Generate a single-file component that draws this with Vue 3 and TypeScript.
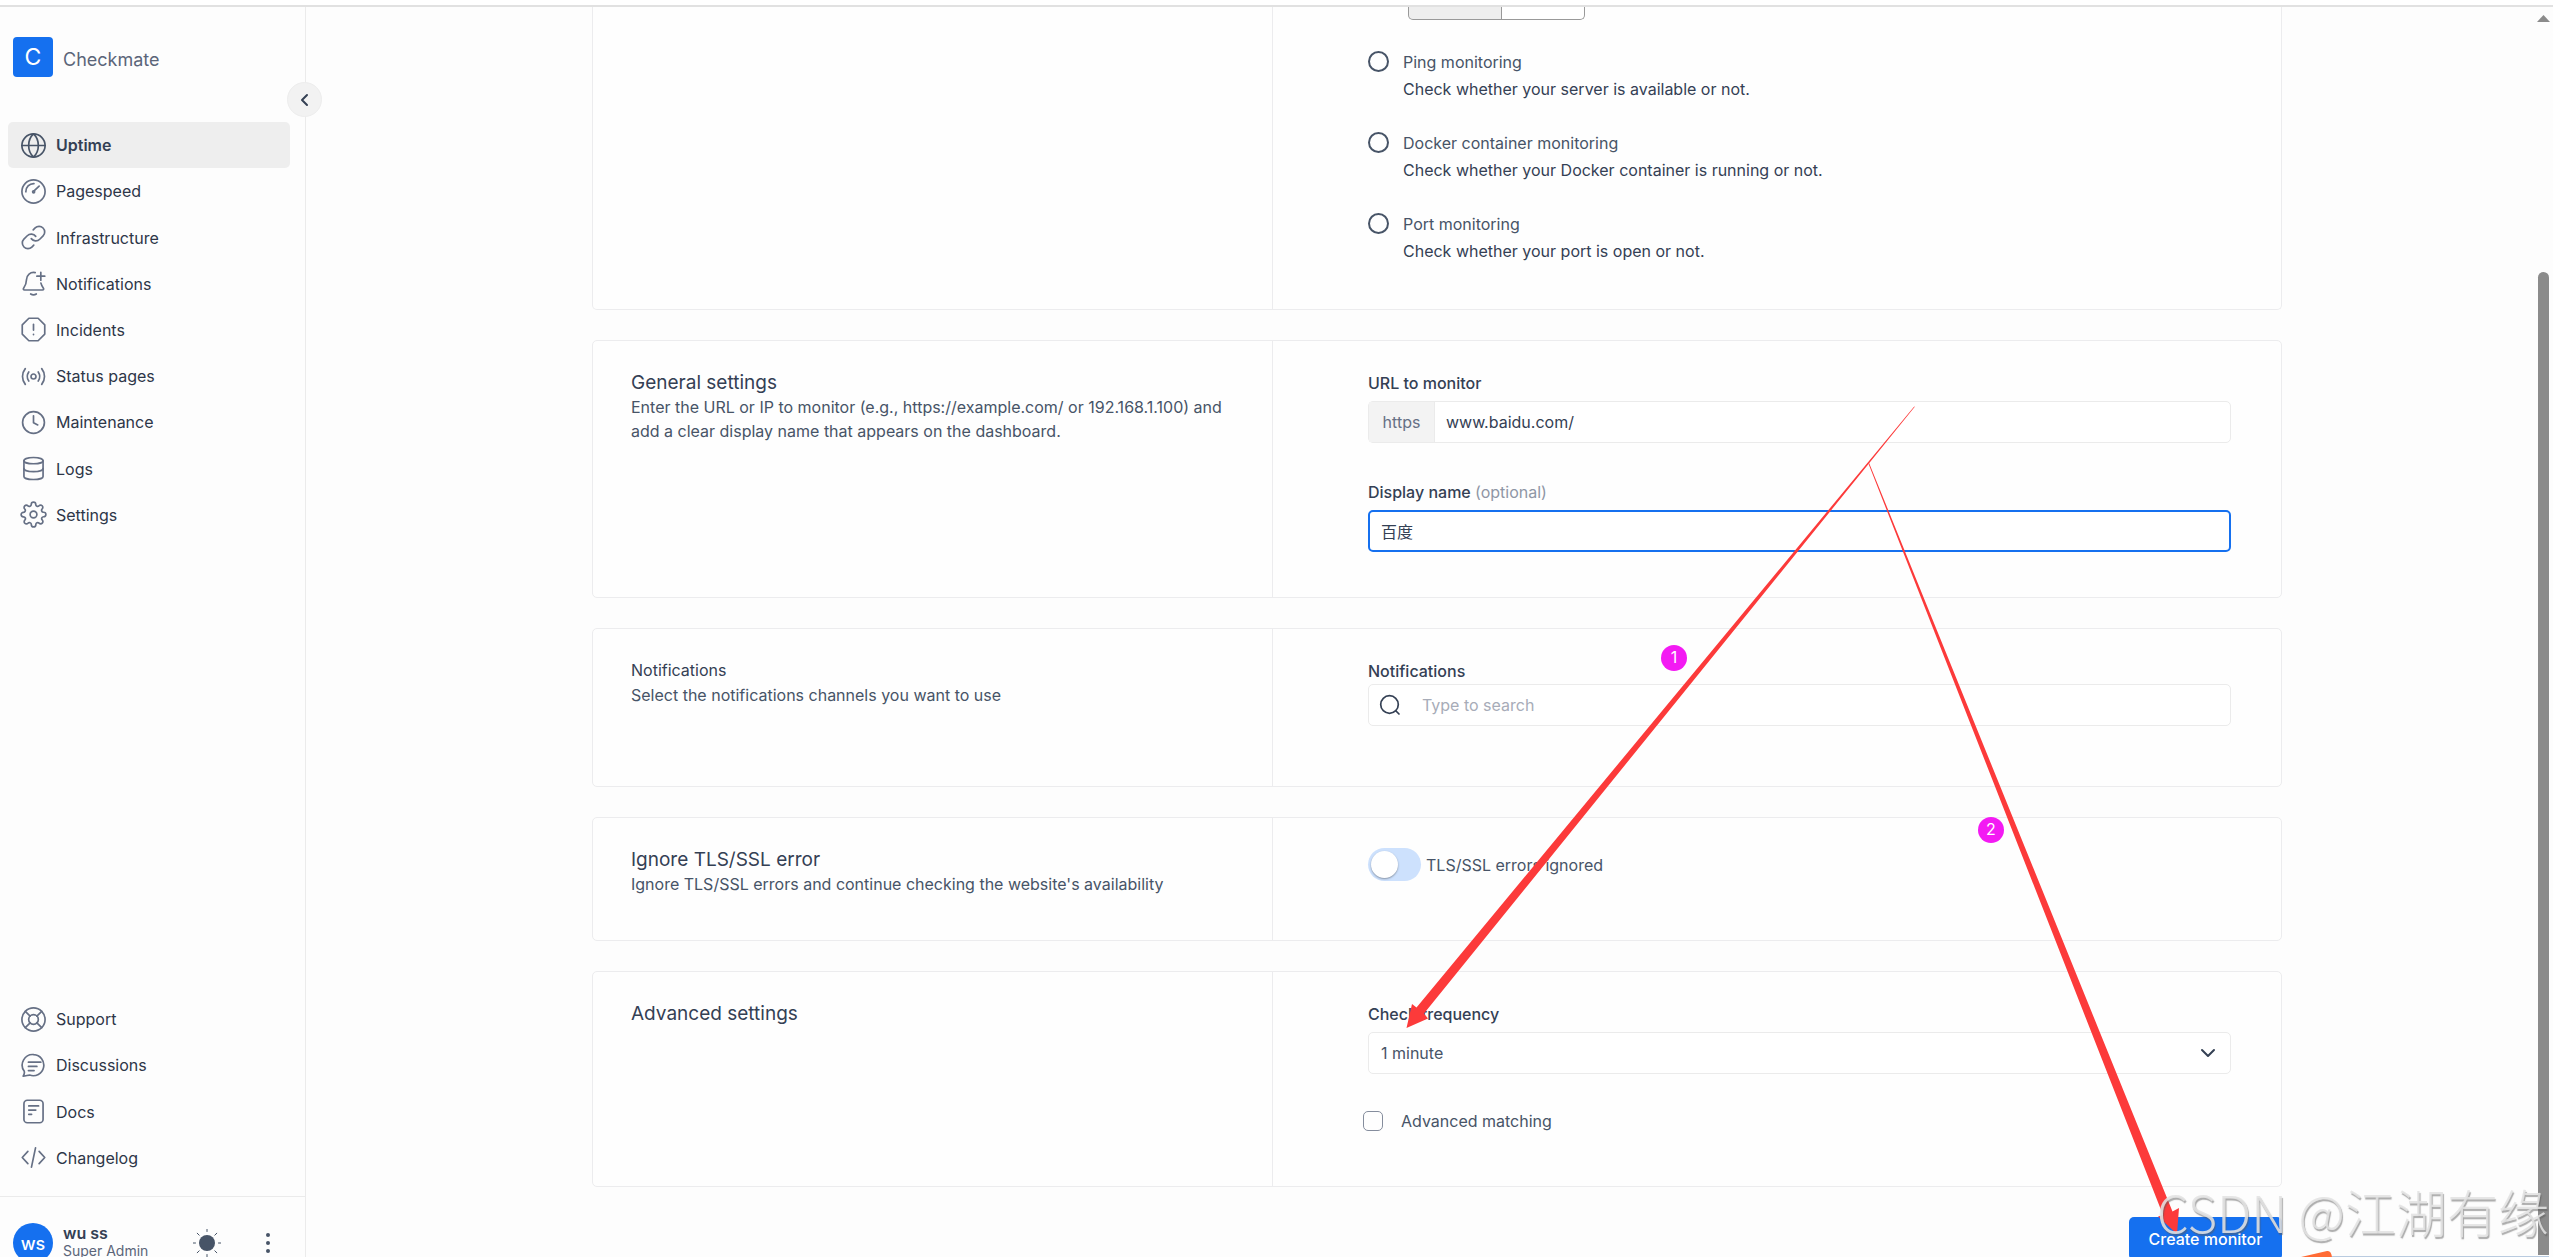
<script setup lang="ts">
import { ref } from 'vue'

interface NavItem {
  label: string
  paths: string[]
}

const mainNav: NavItem[] = [
  {
    label: 'Uptime',
    paths: [
      'M1.7 12a10.3 10.3 0 1 0 20.6 0a10.3 10.3 0 1 0-20.6 0z',
      'M1.7 12h20.6',
      'M12 1.7c-2.8 2.6-4.3 6.300-4.300 10.300s1.500 7.700 4.300 10.300c2.800-2.600 4.300-6.300 4.300-10.300S14.800 4.300 12 1.700z',
    ],
  },
  {
    label: 'Pagespeed',
    paths: [
      'M1.7 12a10.3 10.3 0 1 0 20.6 0a10.3 10.3 0 1 0-20.6 0z',
      'M5.200 12.300A7 7 0 0 1 12.400 5',
      'M12.500 11.500L17 7.200',
      'M11.200 12.300a.9.9 0 1 0 1.800 0a.9.9 0 1 0-1.800 0z',
    ],
  },
  {
    label: 'Infrastructure',
    paths: [
      'M10 13a5 5 0 0 0 7.540.540l3-3a5 5 0 0 0-7.070-7.070l-1.720 1.710',
      'M14 11a5 5 0 0 0-7.540-.540l-3 3a5 5 0 0 0 7.070 7.070l1.710-1.710',
    ],
  },
  {
    label: 'Notifications',
    paths: [
      'M13.500 2.300C9 1.500 6 4.500 5.800 8.500c-.1 4-1.300 6-2.600 7.700-.5.8-.2 1.600.8 1.600h16c1 0 1.300-.8.8-1.600-.9-1.200-1.700-2.500-2.200-4.500',
      'M9.500 21.300c1.500 1 3.500 1 5 0',
      'M18.500 2v7M15 5.500h7',
    ],
  },
  {
    label: 'Incidents',
    paths: ['M7.900 2h8.200L22 7.900v8.200L16.100 22H7.900L2 16.100V7.900z', 'M12 7.500v5', 'M12 16.200v.3'],
  },
  {
    label: 'Status pages',
    paths: [
      'M9.800 12a2.200 2.200 0 1 0 4.400 0a2.200 2.200 0 1 0-4.400 0z',
      'M4.700 5c-3.300 4.200-3.300 9.800 0 14',
      'M19.300 5c3.300 4.200 3.300 9.800 0 14',
      'M7.800 8c-1.700 2.500-1.700 5.500 0 8',
      'M16.200 8c1.700 2.500 1.700 5.500 0 8',
    ],
  },
  {
    label: 'Maintenance',
    paths: ['M2.300 12a9.700 9.700 0 1 0 19.400 0a9.700 9.700 0 1 0-19.400 0z', 'M12 6v6.200l3.800 2'],
  },
  {
    label: 'Logs',
    paths: [
      'M3.500 5c0-1.600 3.800-2.800 8.500-2.800s8.500 1.200 8.500 2.800-3.800 2.800-8.500 2.800S3.500 6.600 3.500 5z',
      'M3.500 5v14c0 1.600 3.800 2.800 8.500 2.800s8.500-1.200 8.500-2.800V5',
      'M3.500 12c0 1.600 3.800 2.800 8.500 2.800s8.500-1.200 8.500-2.800',
    ],
  },
  {
    label: 'Settings',
    paths: [
      'M9 12a3 3 0 1 0 6 0a3 3 0 1 0-6 0z',
      'M19.4 15a1.65 1.65 0 0 0 .33 1.82l.06.06a2 2 0 0 1 0 2.83 2 2 0 0 1-2.83 0l-.06-.06a1.65 1.65 0 0 0-1.82-.33 1.65 1.65 0 0 0-1 1.51V21a2 2 0 0 1-2 2 2 2 0 0 1-2-2v-.09A1.65 1.65 0 0 0 9 19.4a1.65 1.65 0 0 0-1.82.33l-.06.06a2 2 0 0 1-2.83 0 2 2 0 0 1 0-2.83l.06-.06a1.65 1.65 0 0 0 .33-1.82 1.65 1.65 0 0 0-1.51-1H3a2 2 0 0 1-2-2 2 2 0 0 1 2-2h.09A1.65 1.65 0 0 0 4.6 9a1.65 1.65 0 0 0-.33-1.82l-.06-.06a2 2 0 0 1 0-2.83 2 2 0 0 1 2.83 0l.06.06a1.65 1.65 0 0 0 1.82.33H9a1.65 1.65 0 0 0 1-1.51V3a2 2 0 0 1 2-2 2 2 0 0 1 2 2v.09a1.65 1.65 0 0 0 1 1.51 1.65 1.65 0 0 0 1.82-.33l.06-.06a2 2 0 0 1 2.83 0 2 2 0 0 1 0 2.83l-.06.06a1.65 1.65 0 0 0-.33 1.82V9a1.65 1.65 0 0 0 1.51 1H21a2 2 0 0 1 2 2 2 2 0 0 1-2 2h-.09a1.65 1.65 0 0 0-1.51 1z',
    ],
  },
]

const helpNav: NavItem[] = [
  {
    label: 'Support',
    paths: [
      'M1.700 12a10.300 10.300 0 1 0 20.600 0a10.300 10.300 0 1 0-20.600 0z',
      'M7.700 12a4.300 4.300 0 1 0 8.600 0a4.300 4.300 0 1 0-8.600 0z',
      'M4.700 4.700L9 9M15 15l4.300 4.300M19.300 4.700L15 9M9 15l-4.300 4.300',
    ],
  },
  {
    label: 'Discussions',
    paths: [
      'M12.300 2.300a9.400 9.400 0 1 1-3.800 18.200c-1.400 0-3.500.9-5.700 1 .9-1.500 1.400-2.800 1-4.300A9.400 9.400 0 0 1 12.300 2.300z',
      'M7.500 9h11M7.500 12.800h7.500M7.500 16.500h5',
    ],
  },
  {
    label: 'Docs',
    paths: [
      'M6.500 2h11a3 3 0 0 1 3 3v14a3 3 0 0 1-3 3h-11a3 3 0 0 1-3-3V5a3 3 0 0 1 3-3z',
      'M7.800 7h8.700M7.800 10.700h6.200M7.800 14.500h2.500',
    ],
  },
  {
    label: 'Changelog',
    paths: ['M7 6.500L2 12l5 5.500', 'M17 6.500l5 5.500-5 5.500', 'M13.800 3.500l-3.600 17'],
  },
]

const kinds = [
  { id: 'ping', title: 'Ping monitoring', text: 'Check whether your server is available or not.' },
  { id: 'docker', title: 'Docker container monitoring', text: 'Check whether your Docker container is running or not.' },
  { id: 'port', title: 'Port monitoring', text: 'Check whether your port is open or not.' },
]

const kind = ref('http')
const url = ref('www.baidu.com/')
const displayName = ref('百度')
const search = ref('')
const ignoreTls = ref(false)
const frequency = ref('1 minute')
const advanced = ref(false)
</script>

<template>
  <div class="shell">
    <aside class="sidebar">
      <div class="brand">
        <span class="logo">C</span>
        <span class="brand-name">Checkmate</span>
      </div>
      <button class="collapse" type="button" aria-label="Collapse sidebar">
        <svg width="18" height="18" viewBox="0 0 18 18"><path d="M11 4L6 9l5 5" /></svg>
      </button>
      <nav class="nav nav-main">
        <a v-for="(item, i) in mainNav" :key="item.label" href="#" class="nav-item" :class="{ active: i === 0 }">
          <svg class="nav-icon" viewBox="0 0 24 24"><path v-for="d in item.paths" :key="d" :d="d" /></svg>
          {{ item.label }}
        </a>
      </nav>
      <nav class="nav nav-help">
        <a v-for="item in helpNav" :key="item.label" href="#" class="nav-item">
          <svg class="nav-icon" viewBox="0 0 24 24"><path v-for="d in item.paths" :key="d" :d="d" /></svg>
          {{ item.label }}
        </a>
      </nav>
      <div class="account">
        <span class="avatar">ws</span>
        <div class="who">
          <span class="who-name">wu ss</span>
          <span class="who-role">Super Admin</span>
        </div>
        <button class="icon-btn theme" type="button" aria-label="Theme">
          <svg width="28" height="28" viewBox="0 0 28 28">
            <circle cx="14" cy="14" r="8" />
            <path d="M14 0v2.500M14 25.500V28M0 14h2.500M25.500 14H28M4.200 4.200l2 2M21.800 21.800l2 2M4.200 23.800l2-2M21.800 6.200l2-2" />
          </svg>
        </button>
        <button class="icon-btn" type="button" aria-label="Account menu">
          <svg width="8" height="24" viewBox="0 0 8 24">
            <circle cx="4" cy="4" r="2" /><circle cx="4" cy="12" r="2" /><circle cx="4" cy="20" r="2" />
          </svg>
        </button>
      </div>
    </aside>

    <main class="main">
      <form class="form" @submit.prevent>
        <section class="card card-first">
          <div class="card-side"></div>
          <div class="card-body">
            <div class="protocol">
              <button type="button" class="on" aria-label="HTTPS"></button>
              <button type="button" aria-label="HTTP"></button>
            </div>
            <div class="kinds">
              <label v-for="k in kinds" :key="k.id" class="kind">
                <input v-model="kind" type="radio" name="kind" :value="k.id" />
                <span class="kind-text">
                  <span class="kind-title">{{ k.title }}</span>
                  <span>{{ k.text }}</span>
                </span>
              </label>
            </div>
          </div>
        </section>

        <section class="card card-general">
          <div class="card-side">
            <h2>General settings</h2>
            <p>Enter the URL or IP to monitor (e.g., https://example.com/ or 192.168.1.100) and add a clear display name that appears on the dashboard.</p>
          </div>
          <div class="card-body fields">
            <div class="field">
              <label for="url">URL to monitor</label>
              <div class="control">
                <span class="prefix">https</span>
                <input id="url" v-model="url" type="text" />
              </div>
            </div>
            <div class="field">
              <label for="name">Display name <span class="optional">(optional)</span></label>
              <div class="control focused">
                <input id="name" v-model="displayName" type="text" />
              </div>
            </div>
          </div>
        </section>

        <section class="card card-notify">
          <div class="card-side">
            <h2 class="small">Notifications</h2>
            <p>Select the notifications channels you want to use</p>
          </div>
          <div class="card-body">
            <div class="field tight">
              <label for="search">Notifications</label>
              <div class="control">
                <svg class="search-icon" width="24" height="24" viewBox="0 0 24 24">
                  <circle cx="11.500" cy="11.500" r="8.800" /><path d="M18 18l3 3" />
                </svg>
                <input id="search" v-model="search" type="text" placeholder="Type to search" />
              </div>
            </div>
          </div>
        </section>

        <section class="card card-tls">
          <div class="card-side">
            <h2>Ignore TLS/SSL error</h2>
            <p>Ignore TLS/SSL errors and continue checking the website's availability</p>
          </div>
          <div class="card-body">
            <label class="switch-row">
              <input v-model="ignoreTls" class="switch" type="checkbox" role="switch" />
              TLS/SSL errors ignored
            </label>
          </div>
        </section>

        <section class="card card-advanced">
          <div class="card-side">
            <h2>Advanced settings</h2>
          </div>
          <div class="card-body fields">
            <div class="field">
              <label for="frequency">Check frequency</label>
              <div class="control">
                <select id="frequency" v-model="frequency">
                  <option>1 minute</option>
                </select>
                <svg class="chevron" width="16" height="16" viewBox="0 0 16 16"><path d="M2 5l6 6 6-6" /></svg>
              </div>
            </div>
            <label class="check-row">
              <input v-model="advanced" type="checkbox" />
              Advanced matching
            </label>
          </div>
        </section>

        <button class="submit" type="submit">Create monitor</button>
      </form>
    </main>

    <div class="scrollbar">
      <svg width="13" height="7" viewBox="0 0 13 7"><path d="M6.500 0L13 7H0z" /></svg>
      <div class="thumb"></div>
    </div>

    <svg class="arrows" width="2553" height="1257" viewBox="0 0 2553 1257">
      <path fill="#fc3a3a" d="M1914.800 406.800L1424 1013.500L1428 1018.500L1406.500 1028L1412 1004L1416.500 1007.500L1914.200 406.400z" />
      <path fill="#fc3a3a" d="M1868.400 463.500L1869.200 463.200L2172.500 1211.500L2179 1208L2177 1234L2158 1216.500L2163 1215z" />
      <path fill="#ff6b35" d="M2301 1257L2327 1251Q2331 1250 2332 1257z" />
      <path fill="#b9cbe0" d="M2332 1256h217v1h-217z" />
    </svg>
    <span class="step step-one">1</span>
    <span class="step step-two">2</span>
    <div class="watermark">CSDN @江湖有缘</div>
  </div>
</template>

<style>
html,
body {
  margin: 0;
  background: #fdfdfd;
}
</style>

<style scoped>
.shell {
  position: relative;
  display: flex;
  height: 100vh;
  overflow: hidden;
  box-sizing: border-box;
  padding-top: 7px;
  background: linear-gradient(#ffffff 5px, #e1e1e1 5px, #e1e1e1 7px, #fdfdfd 7px);
  font-family: Inter, 'Noto Sans CJK SC', sans-serif;
  font-size: 16px;
  line-height: 24px;
  color: #344054;
}

.shell *,
.shell *::before {
  box-sizing: border-box;
}

button,
input,
select {
  font: inherit;
  color: inherit;
}

svg {
  fill: none;
  stroke: currentColor;
  stroke-linecap: round;
  stroke-linejoin: round;
}

/* Sidebar */
.sidebar {
  position: relative;
  flex: 0 0 306px;
  display: flex;
  flex-direction: column;
  border-right: 1px solid #ebebeb;
}

.brand {
  display: flex;
  align-items: center;
  gap: 10px;
  padding: 30px 13px 0;
}

.logo {
  width: 40px;
  height: 40px;
  border-radius: 4px;
  background: #1570ef;
  color: #fff;
  font-size: 23px;
  line-height: 40px;
  text-align: center;
}

.brand-name {
  padding-top: 6px;
  font-size: 18px;
  color: #5b6579;
}

.collapse {
  position: absolute;
  top: 75px;
  right: -17px;
  display: grid;
  place-items: center;
  width: 35px;
  height: 35px;
  padding: 0;
  border: 1px solid #ededed;
  border-radius: 50%;
  background: #f2f2f2;
}

.collapse svg {
  stroke-width: 2;
}

.nav {
  display: grid;
  grid-auto-rows: 1fr;
  padding: 0 15px 0 8px;
}

.nav-main {
  height: 416px;
  margin-top: 45px;
}

.nav-help {
  height: 185px;
  margin-top: auto;
}

.nav-item {
  display: flex;
  align-items: center;
  gap: 9px;
  padding: 0 12px;
  border-radius: 5px;
  color: #2d3648;
  text-decoration: none;
}

.nav-item.active {
  background: #eeeeee;
  color: #344054;
  font-weight: 600;
}

.nav-icon {
  width: 27px;
  height: 27px;
  color: #667085;
  stroke-width: 1.5;
}

.active .nav-icon {
  color: #475467;
}

.account {
  display: flex;
  align-items: center;
  height: 61px;
  margin-top: 15px;
  padding: 32px 8px 0 13px;
  border-top: 1px solid #ebebeb;
}

.avatar {
  flex: none;
  width: 40px;
  height: 40px;
  border-radius: 50%;
  background: #1570ef;
  color: #fff;
  font-size: 18px;
  font-weight: 500;
  line-height: 42px;
  text-align: center;
}

.who {
  display: flex;
  flex-direction: column;
  width: 130px;
  margin-left: 10px;
  padding-bottom: 2px;
  line-height: 18px;
}

.who-name {
  font-weight: 600;
}

.who-role {
  font-size: 14px;
  color: #5b6579;
}

.icon-btn {
  display: flex;
  padding: 0;
  border: 0;
  background: none;
  color: #475467;
}

.icon-btn circle {
  fill: currentColor;
  stroke: none;
}

.theme {
  margin-right: 43px;
}

/* Form */
.main {
  flex: 1;
  min-width: 0;
  padding-left: 15px;
}

.form {
  display: flex;
  flex-direction: column;
  gap: 30px;
  max-width: 1690px;
  margin: 0 auto;
}

.card {
  display: grid;
  grid-template-columns: 680fr 1008fr;
  border: 1px solid #ececee;
  border-radius: 5px;
  background: #fefefe;
}

.card-side {
  padding: 29px 38px;
  border-right: 1px solid #ececee;
}

.card-body {
  padding: 30px 50px 45px 95px;
}

.card-first {
  border-top: 0;
  border-radius: 0 0 5px 5px;
}

.card-first .card-body {
  padding-top: 0;
  padding-bottom: 44px;
}

.card-notify .card-body {
  padding-bottom: 60px;
}

.card-tls .card-body {
  padding-bottom: 59px;
}

.card-advanced .card-body {
  padding-bottom: 55px;
}

h2 {
  margin: 0;
  font-size: 19px;
  font-weight: 400;
  line-height: 25px;
}

h2.small {
  font-size: 16px;
}

p {
  margin: 0;
  color: #475467;
}

.protocol {
  display: flex;
  padding-left: 40px;
}

.protocol button {
  width: 83px;
  height: 13px;
  padding: 0;
  border: 1px solid #999;
  border-top: 0;
  border-left: 0;
  border-radius: 0 0 5px 0;
  background: #fff;
}

.protocol .on {
  width: 94px;
  border-left: 1px solid #999;
  border-radius: 0 0 0 5px;
  background: #eeeeee;
}

.kinds {
  display: flex;
  flex-direction: column;
  gap: 27px;
  padding-top: 29px;
}

.kind {
  display: flex;
  gap: 14px;
}

.kind input {
  appearance: none;
  flex: none;
  width: 21px;
  height: 21px;
  margin: 2px 0 0;
  border: 2px solid #475467;
  border-radius: 50%;
}

.kind-text {
  display: flex;
  flex-direction: column;
  line-height: 27px;
}

.kind-title {
  color: #475467;
}

.fields {
  display: flex;
  flex-direction: column;
  gap: 37px;
}

.field {
  display: flex;
  flex-direction: column;
  gap: 6px;
}

.field.tight {
  gap: 1px;
}

.field > label {
  font-weight: 500;
}

.optional {
  font-weight: 400;
  color: #8f96a5;
}

.control {
  position: relative;
  display: flex;
  align-items: center;
  height: 42px;
  border: 1px solid #ebebeb;
  border-radius: 5px;
  background: #fff;
}

.control.focused {
  border: 2px solid #1570ef;
}

.control input,
.control select {
  flex: 1;
  min-width: 0;
  height: 100%;
  padding: 0 11px;
  border: 0;
  outline: 0;
  background: none;
}

.control select {
  appearance: none;
  padding: 0 12px;
  color: #475467;
}

.control input::placeholder {
  color: #a7acb8;
  opacity: 1;
}

.prefix {
  display: grid;
  place-items: center;
  align-self: stretch;
  width: 66px;
  border-right: 1px solid #ebebeb;
  background: #f3f3f3;
  color: #667085;
}

.search-icon {
  margin: 0 9px;
  stroke-width: 1.7;
}

.chevron {
  position: absolute;
  right: 14px;
  stroke-width: 2;
  pointer-events: none;
}

.switch-row {
  display: flex;
  align-items: center;
  gap: 5px;
  color: #475467;
}

.switch {
  appearance: none;
  display: flex;
  width: 53px;
  height: 33px;
  margin: 0;
  padding: 3px;
  border-radius: 17px;
  background: #cde1fd;
}

.switch::before {
  content: '';
  width: 27px;
  height: 27px;
  border-radius: 50%;
  background: #fff;
  box-shadow: 0 1px 2px rgba(0, 0, 0, 0.35);
}

.check-row {
  display: flex;
  align-items: center;
  gap: 18px;
  height: 20px;
  margin-left: -5px;
  color: #475467;
}

.check-row input {
  appearance: none;
  width: 20px;
  height: 20px;
  margin: 0;
  border: 1px solid #858d9d;
  border-radius: 5px;
}

.submit {
  align-self: flex-end;
  width: 153px;
  height: 43px;
  padding: 0;
  border: 0;
  border-radius: 5px;
  background: #1570ef;
  color: #fff;
  font-weight: 500;
}

/* Scrollbar */
.scrollbar {
  position: absolute;
  top: 7px;
  right: 0;
  bottom: 0;
  width: 19px;
  padding: 8px 3px 2px;
  display: flex;
  flex-direction: column;
  gap: 250px;
}

.scrollbar svg {
  flex: none;
  fill: #8b8b8b;
  stroke: none;
}

.thumb {
  flex: 1;
  width: 11px;
  margin-left: 1px;
  border-radius: 6px 6px 0 0;
  background: #8b8b8b;
}

/* Annotations over the page */
.arrows {
  position: absolute;
  top: 0;
  left: 0;
  stroke: none;
  pointer-events: none;
}

.step {
  position: absolute;
  width: 26px;
  height: 26px;
  border-radius: 50%;
  background: #f31af3;
  color: #fff;
  line-height: 25px;
  text-align: center;
}

.step-one {
  top: 645px;
  left: 1661px;
}

.step-two {
  top: 817px;
  left: 1978px;
}

.watermark {
  position: absolute;
  right: 4px;
  bottom: 10px;
  font-family: 'Noto Sans CJK SC', sans-serif;
  font-size: 51px;
  font-weight: 300;
  line-height: 72px;
  white-space: nowrap;
  color: rgba(226, 226, 226, 0.88);
  text-shadow: 1px 2px 1px rgba(90, 90, 90, 0.5);
  pointer-events: none;
}
</style>
